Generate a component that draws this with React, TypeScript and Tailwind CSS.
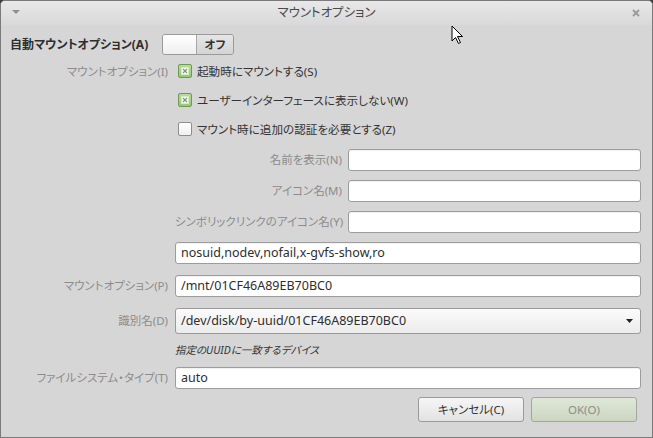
import React from "react";

const FONT = {
  fontFamily: '"Noto Sans", "Noto Sans CJK JP", sans-serif',
  fontFeatureSettings: '"palt"',
};

function Check({ checked }: { checked: boolean }) {
  if (!checked)
    return (
      <div className="w-[14px] h-[14px] rounded-[2px] border border-[#8e8e8e] bg-gradient-to-b from-[#ffffff] to-[#f0f0f0] shrink-0" />
    );
  return (
    <div className="w-[14px] h-[14px] rounded-[2px] border border-[#6f9a52] bg-gradient-to-b from-[#b5dc98] to-[#98c878] shrink-0 flex items-center justify-center">
      <svg width="8" height="8" viewBox="0 0 8 8">
        <rect x="0.5" y="0.5" width="7" height="7" fill="#ffffff" stroke="#d8e8cc" strokeWidth="1" />
        <path d="M2 2 L6 6 M6 2 L2 6" stroke="#7a9a6a" strokeWidth="1.3" />
      </svg>
    </div>
  );
}

function Input({ value = "" }: { value?: string }) {
  return (
    <div className="h-[22px] w-full bg-white border border-[#9c9c9c] rounded-[3px] flex items-center px-[5px] text-[12.5px] text-[#2e2e2e] whitespace-nowrap shadow-[inset_0_1px_1px_rgba(0,0,0,0.06)]">
      {value}
    </div>
  );
}

function CheckRow({ label, checked, text }: { label?: string; checked: boolean; text: string }) {
  return (
    <div className="h-[29px] grid grid-cols-[158px_1fr] gap-x-[7px] items-center">
      <div className="text-right text-[11.5px] text-[#8c8c8c] whitespace-nowrap">{label}</div>
      <div className="flex items-center gap-[5px] pl-[3px] text-[11.6px] text-[#333333] whitespace-nowrap">
        <Check checked={checked} />
        <span>{text}</span>
      </div>
    </div>
  );
}

const LABEL = "text-right text-[11.5px] text-[#8c8c8c] whitespace-nowrap";

export default function App() {
  return (
    <div className="w-[653px] h-[438px] bg-[#3c3c3c]" style={FONT}>
      <div className="relative w-[653px] h-[438px] bg-[#d6d6d6] border border-[#7a7a7a] rounded-t-[5px] overflow-hidden flex flex-col">
        {/* title bar */}
        <div className="h-[24px] shrink-0 bg-gradient-to-b from-[#e8e8e8] to-[#d9d9d9] flex items-center justify-between px-[10px] relative">
          <svg width="10" height="6" viewBox="0 0 10 6" className="mt-[-2px]">
            <path d="M1 1 L9 1 L5 5 Z" fill="#8f8f8f" />
          </svg>
          <div className="absolute left-0 right-0 top-0 h-[24px] flex items-center justify-center text-[12.5px] text-[#4a4a4a]">
            マウントオプション
          </div>
          <svg width="10" height="10" viewBox="0 0 10 10" className="mr-[1px]">
            <path d="M2 2 L8 8 M8 2 L2 8" stroke="#9c9c9c" strokeWidth="2" />
          </svg>
        </div>

        {/* body */}
        <div className="flex flex-col pl-[9px] pr-[11px]">
          {/* auto mount row */}
          <div className="mt-[9px] h-[21px] flex items-center">
            <div className="text-[12px] font-bold text-[#2e2e2e] w-[152px] whitespace-nowrap">自動マウントオプション(A)</div>
            <div className="flex h-[21px] w-[72px] rounded-[3px] border border-[#9a9a9a] overflow-hidden">
              <div className="w-[34px] bg-gradient-to-b from-[#ffffff] to-[#efefef] border-r border-[#a8a8a8]" />
              <div className="flex-1 bg-gradient-to-b from-[#e6e6e6] to-[#d4d4d4] flex items-center justify-center text-[11.5px] font-bold text-[#333]">
                オフ
              </div>
            </div>
          </div>

          <div className="mt-[2px]">
            <CheckRow label="マウントオプション(I)" checked={true} text="起動時にマウントする(S)" />
            <CheckRow checked={true} text="ユーザーインターフェースに表示しない(W)" />
            <CheckRow checked={false} text="マウント時に追加の認証を必要とする(Z)" />
          </div>

          <div className="grid grid-cols-[158px_1fr] gap-x-[7px] mt-[5px]">
            <div />
            <div className="flex flex-col gap-[9px]">
              {["名前を表示(N)", "アイコン名(M)", "シンボリックリンクのアイコン名(Y)"].map((l) => (
                <div key={l} className="grid grid-cols-[167px_1fr] gap-x-[6px] items-center">
                  <div className={LABEL}>{l}</div>
                  <Input />
                </div>
              ))}
              <Input value="nosuid,nodev,nofail,x-gvfs-show,ro" />
            </div>
          </div>

          <div className="grid grid-cols-[158px_1fr] gap-x-[7px] items-center mt-[11px]">
            <div className={LABEL}>マウントオプション(P)</div>
            <Input value="/mnt/01CF46A89EB70BC0" />
          </div>

          <div className="grid grid-cols-[158px_1fr] gap-x-[7px] items-center mt-[11px]">
            <div className={LABEL}>識別名(D)</div>
            <div className="h-[26px] w-full rounded-[3px] border border-[#9a9a9a] bg-gradient-to-b from-[#fbfbfb] to-[#ececec] flex items-center justify-between pl-[5px] pr-[7px] text-[12.5px] text-[#2e2e2e]">
              <span>/dev/disk/by-uuid/01CF46A89EB70BC0</span>
              <svg width="7" height="4" viewBox="0 0 7 4">
                <path d="M0 0 L7 0 L3.5 4 Z" fill="#222" />
              </svg>
            </div>
          </div>

          <div className="grid grid-cols-[158px_1fr] gap-x-[7px] items-center h-[33px]">
            <div />
            <div className="text-[10.5px] italic text-[#333] whitespace-nowrap">指定のUUIDに一致するデバイス</div>
          </div>

          <div className="grid grid-cols-[158px_1fr] gap-x-[7px] items-center">
            <div className={LABEL}>ファイルシステム・タイプ(T)</div>
            <Input value="auto" />
          </div>

          <div className="flex justify-end gap-[7px] mt-[8px] pr-[4px]">
            <div className="w-[106px] h-[25px] rounded-[3px] border border-[#9a9a9a] bg-gradient-to-b from-[#f6f6f6] to-[#e2e2e2] flex items-center justify-center text-[11.5px] text-[#333]">
              キャンセル(C)
            </div>
            <div className="w-[106px] h-[25px] rounded-[3px] border border-[#a0a89a] bg-gradient-to-b from-[#dfe8d8] to-[#cbd6c2] flex items-center justify-center text-[11.5px] text-[#8a8f86]">
              OK(O)
            </div>
          </div>
        </div>

        {/* mouse cursor */}
        <svg width="14" height="20" viewBox="0 0 14 20" className="absolute left-[450px] top-[24px]">
          <path d="M1 1 L1 16 L4.5 12.5 L7.5 18.5 L9.5 17.5 L6.5 11.5 L11.5 11.5 Z" fill="#ffffff" stroke="#000000" strokeWidth="1" strokeLinejoin="round" />
        </svg>
      </div>
    </div>
  );
}
